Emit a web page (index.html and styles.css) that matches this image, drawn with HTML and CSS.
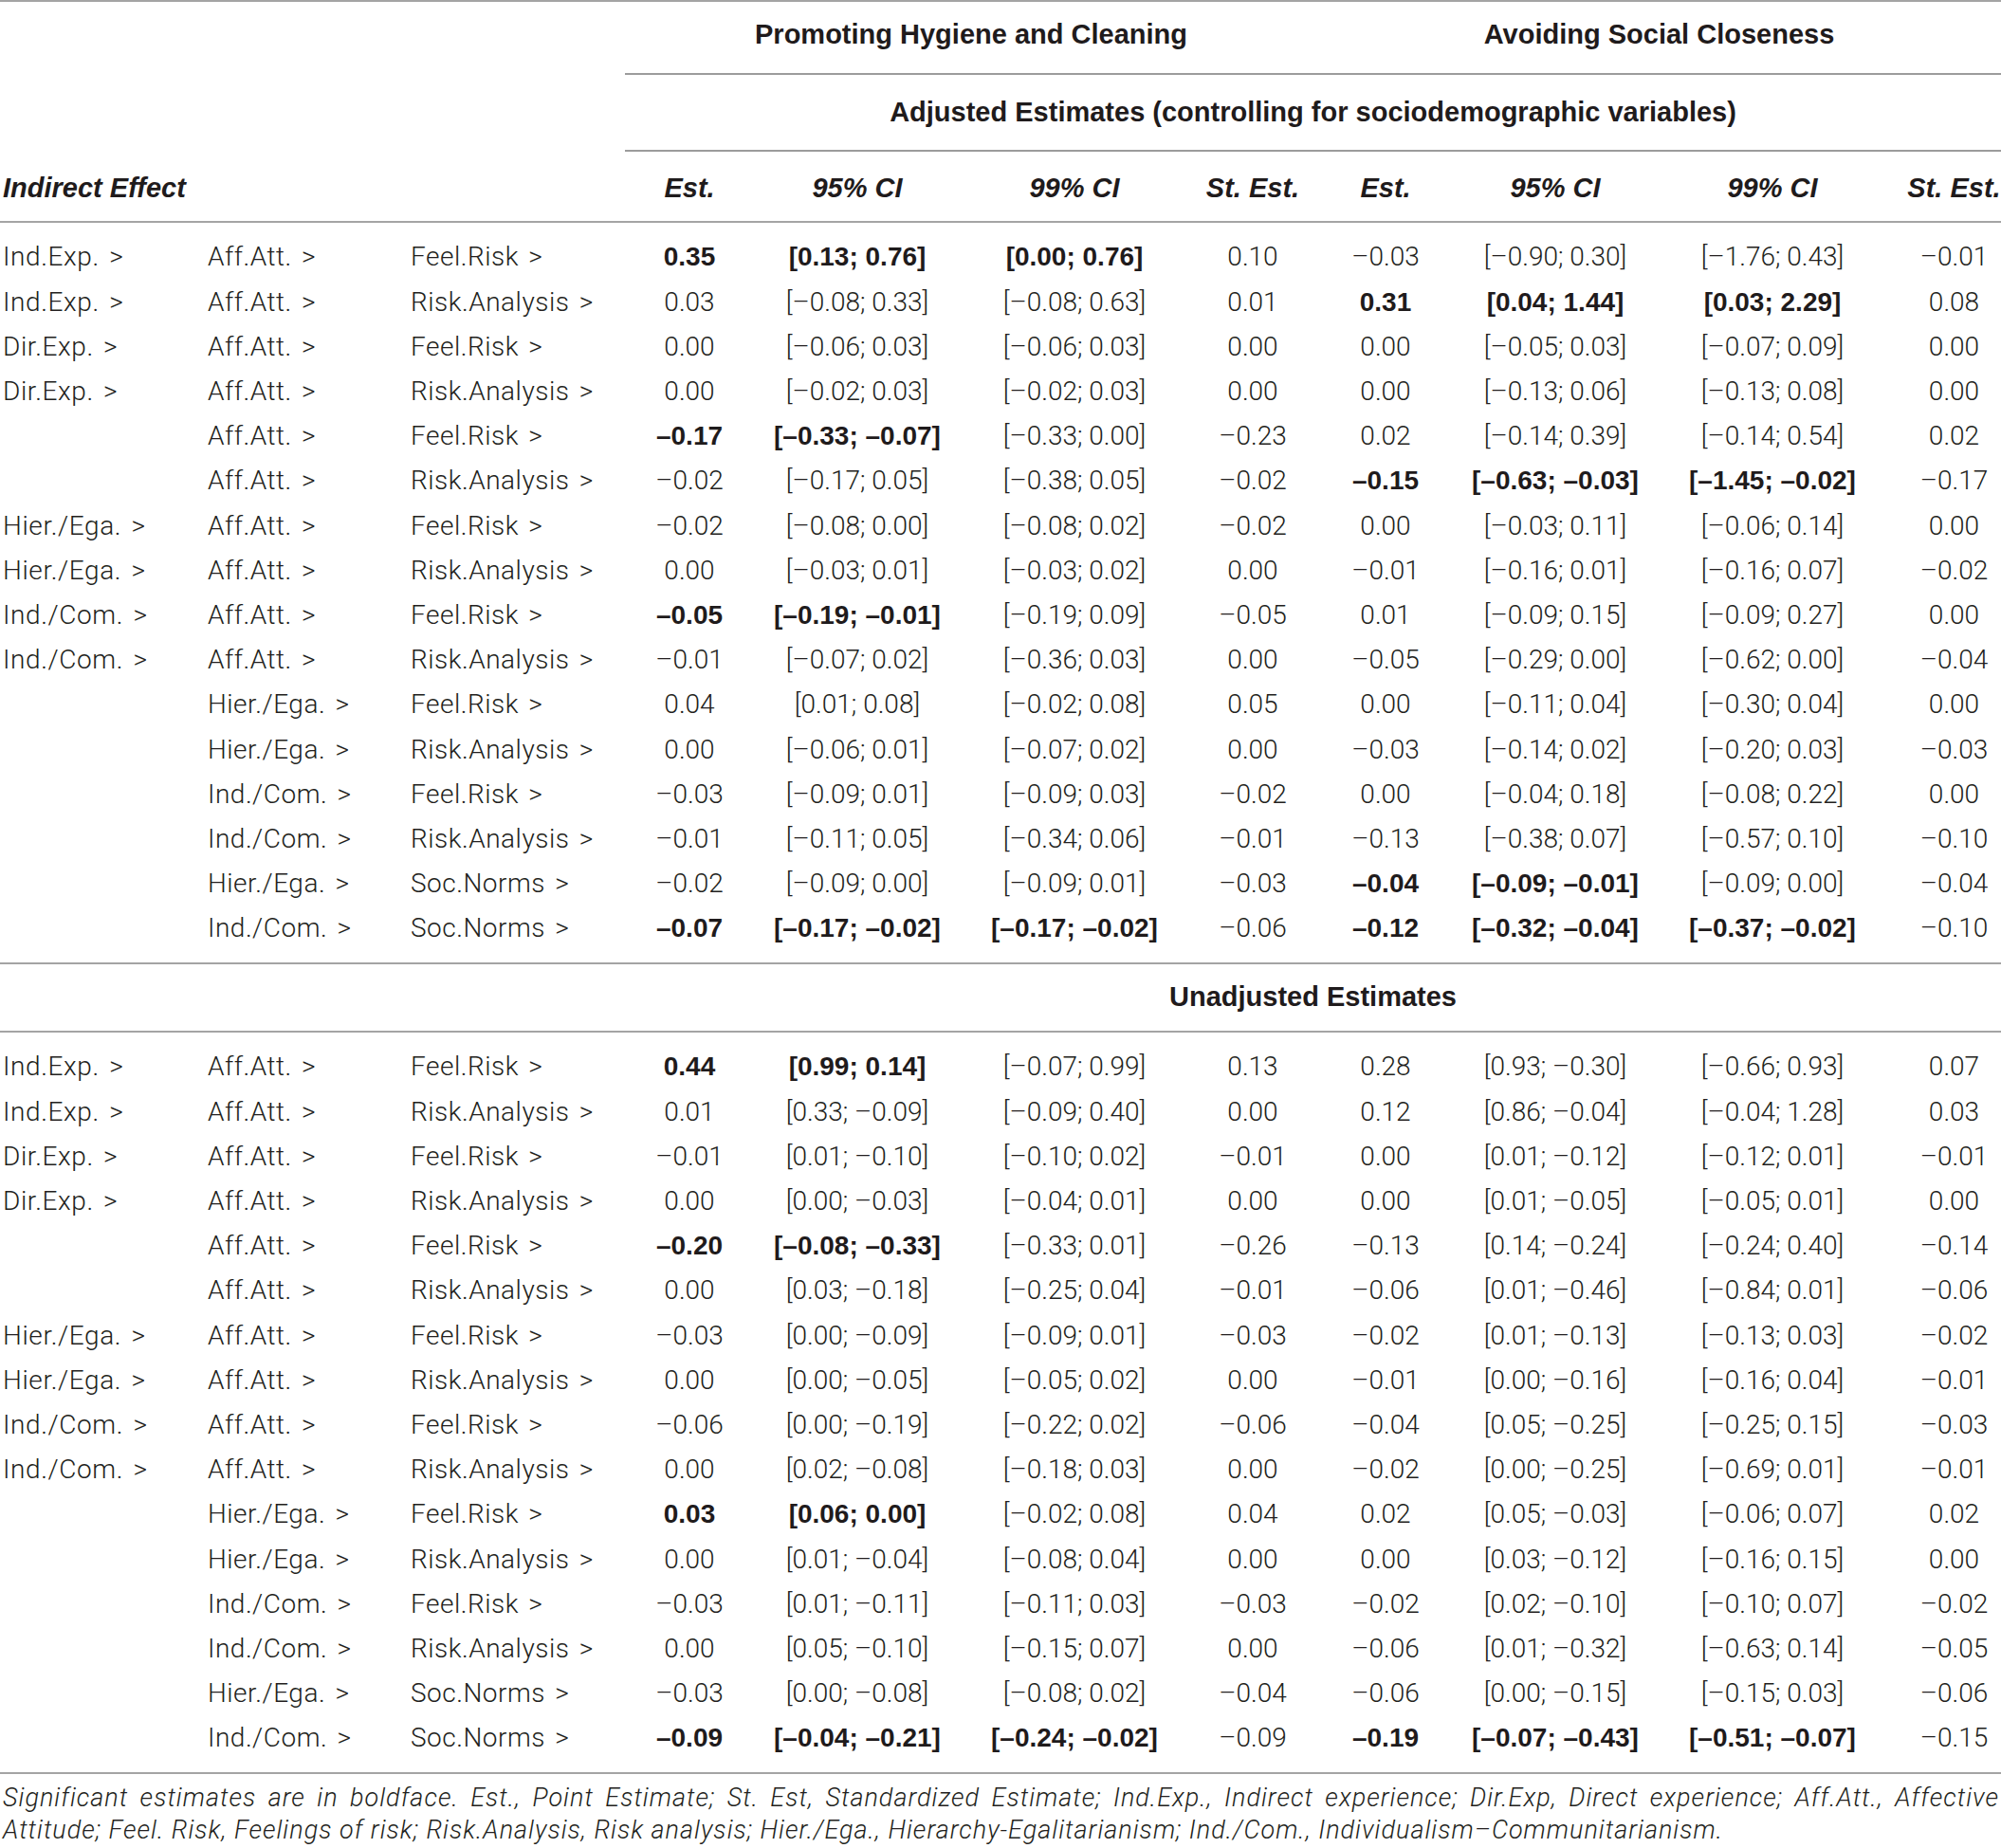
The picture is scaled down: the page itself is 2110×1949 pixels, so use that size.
FILE: index.html
```html
<!DOCTYPE html>
<html lang="en">
<head>
<meta charset="utf-8">
<title>Indirect effects table</title>
<link rel="stylesheet" href="styles.css">
</head>
<body>
<table class="tbl">
<colgroup>
<col class="w1"><col class="w2"><col class="w3"><col class="w4"><col class="w5"><col class="w6"><col class="w7"><col class="w8"><col class="w9"><col class="w10"><col class="w11">
</colgroup>
<thead>
<tr class="h1">
<td colspan="3"></td>
<th colspan="4" class="span">Promoting Hygiene and Cleaning</th>
<th colspan="4" class="span">Avoiding Social Closeness</th>
</tr>
<tr class="h2">
<td colspan="3"></td>
<th colspan="8" class="span">Adjusted Estimates (controlling for sociodemographic variables)</th>
</tr>
<tr class="h3">
<th colspan="3" class="ie">Indirect Effect</th>
<th>Est.</th><th>95% CI</th><th>99% CI</th><th>St. Est.</th>
<th>Est.</th><th>95% CI</th><th>99% CI</th><th class="last">St. Est.</th>
</tr>
</thead>
<tbody>
<tr class="first"><td class="a">Ind.Exp. &gt;</td><td class="b">Aff.Att. &gt;</td><td class="b">Feel.Risk &gt;</td><td class="s">0.35</td><td class="s">[0.13; 0.76]</td><td class="s">[0.00; 0.76]</td><td>0.10</td><td>–0.03</td><td>[–0.90; 0.30]</td><td>[–1.76; 0.43]</td><td class="last">–0.01</td></tr>
<tr><td class="a">Ind.Exp. &gt;</td><td class="b">Aff.Att. &gt;</td><td class="b">Risk.Analysis &gt;</td><td>0.03</td><td>[–0.08; 0.33]</td><td>[–0.08; 0.63]</td><td>0.01</td><td class="s">0.31</td><td class="s">[0.04; 1.44]</td><td class="s">[0.03; 2.29]</td><td class="last">0.08</td></tr>
<tr><td class="a">Dir.Exp. &gt;</td><td class="b">Aff.Att. &gt;</td><td class="b">Feel.Risk &gt;</td><td>0.00</td><td>[–0.06; 0.03]</td><td>[–0.06; 0.03]</td><td>0.00</td><td>0.00</td><td>[–0.05; 0.03]</td><td>[–0.07; 0.09]</td><td class="last">0.00</td></tr>
<tr><td class="a">Dir.Exp. &gt;</td><td class="b">Aff.Att. &gt;</td><td class="b">Risk.Analysis &gt;</td><td>0.00</td><td>[–0.02; 0.03]</td><td>[–0.02; 0.03]</td><td>0.00</td><td>0.00</td><td>[–0.13; 0.06]</td><td>[–0.13; 0.08]</td><td class="last">0.00</td></tr>
<tr><td class="a"></td><td class="b">Aff.Att. &gt;</td><td class="b">Feel.Risk &gt;</td><td class="s">–0.17</td><td class="s">[–0.33; –0.07]</td><td>[–0.33; 0.00]</td><td>–0.23</td><td>0.02</td><td>[–0.14; 0.39]</td><td>[–0.14; 0.54]</td><td class="last">0.02</td></tr>
<tr><td class="a"></td><td class="b">Aff.Att. &gt;</td><td class="b">Risk.Analysis &gt;</td><td>–0.02</td><td>[–0.17; 0.05]</td><td>[–0.38; 0.05]</td><td>–0.02</td><td class="s">–0.15</td><td class="s">[–0.63; –0.03]</td><td class="s">[–1.45; –0.02]</td><td class="last">–0.17</td></tr>
<tr><td class="a">Hier./Ega. &gt;</td><td class="b">Aff.Att. &gt;</td><td class="b">Feel.Risk &gt;</td><td>–0.02</td><td>[–0.08; 0.00]</td><td>[–0.08; 0.02]</td><td>–0.02</td><td>0.00</td><td>[–0.03; 0.11]</td><td>[–0.06; 0.14]</td><td class="last">0.00</td></tr>
<tr><td class="a">Hier./Ega. &gt;</td><td class="b">Aff.Att. &gt;</td><td class="b">Risk.Analysis &gt;</td><td>0.00</td><td>[–0.03; 0.01]</td><td>[–0.03; 0.02]</td><td>0.00</td><td>–0.01</td><td>[–0.16; 0.01]</td><td>[–0.16; 0.07]</td><td class="last">–0.02</td></tr>
<tr><td class="a">Ind./Com. &gt;</td><td class="b">Aff.Att. &gt;</td><td class="b">Feel.Risk &gt;</td><td class="s">–0.05</td><td class="s">[–0.19; –0.01]</td><td>[–0.19; 0.09]</td><td>–0.05</td><td>0.01</td><td>[–0.09; 0.15]</td><td>[–0.09; 0.27]</td><td class="last">0.00</td></tr>
<tr><td class="a">Ind./Com. &gt;</td><td class="b">Aff.Att. &gt;</td><td class="b">Risk.Analysis &gt;</td><td>–0.01</td><td>[–0.07; 0.02]</td><td>[–0.36; 0.03]</td><td>0.00</td><td>–0.05</td><td>[–0.29; 0.00]</td><td>[–0.62; 0.00]</td><td class="last">–0.04</td></tr>
<tr><td class="a"></td><td class="b">Hier./Ega. &gt;</td><td class="b">Feel.Risk &gt;</td><td>0.04</td><td>[0.01; 0.08]</td><td>[–0.02; 0.08]</td><td>0.05</td><td>0.00</td><td>[–0.11; 0.04]</td><td>[–0.30; 0.04]</td><td class="last">0.00</td></tr>
<tr><td class="a"></td><td class="b">Hier./Ega. &gt;</td><td class="b">Risk.Analysis &gt;</td><td>0.00</td><td>[–0.06; 0.01]</td><td>[–0.07; 0.02]</td><td>0.00</td><td>–0.03</td><td>[–0.14; 0.02]</td><td>[–0.20; 0.03]</td><td class="last">–0.03</td></tr>
<tr><td class="a"></td><td class="b">Ind./Com. &gt;</td><td class="b">Feel.Risk &gt;</td><td>–0.03</td><td>[–0.09; 0.01]</td><td>[–0.09; 0.03]</td><td>–0.02</td><td>0.00</td><td>[–0.04; 0.18]</td><td>[–0.08; 0.22]</td><td class="last">0.00</td></tr>
<tr><td class="a"></td><td class="b">Ind./Com. &gt;</td><td class="b">Risk.Analysis &gt;</td><td>–0.01</td><td>[–0.11; 0.05]</td><td>[–0.34; 0.06]</td><td>–0.01</td><td>–0.13</td><td>[–0.38; 0.07]</td><td>[–0.57; 0.10]</td><td class="last">–0.10</td></tr>
<tr><td class="a"></td><td class="b">Hier./Ega. &gt;</td><td class="b">Soc.Norms &gt;</td><td>–0.02</td><td>[–0.09; 0.00]</td><td>[–0.09; 0.01]</td><td>–0.03</td><td class="s">–0.04</td><td class="s">[–0.09; –0.01]</td><td>[–0.09; 0.00]</td><td class="last">–0.04</td></tr>
<tr class="lastrow"><td class="a"></td><td class="b">Ind./Com. &gt;</td><td class="b">Soc.Norms &gt;</td><td class="s">–0.07</td><td class="s">[–0.17; –0.02]</td><td class="s">[–0.17; –0.02]</td><td>–0.06</td><td class="s">–0.12</td><td class="s">[–0.32; –0.04]</td><td class="s">[–0.37; –0.02]</td><td class="last">–0.10</td></tr>
</tbody>
<tbody>
<tr class="h4">
<td colspan="3"></td>
<th colspan="8">Unadjusted Estimates</th>
</tr>
<tr class="first"><td class="a">Ind.Exp. &gt;</td><td class="b">Aff.Att. &gt;</td><td class="b">Feel.Risk &gt;</td><td class="s">0.44</td><td class="s">[0.99; 0.14]</td><td>[–0.07; 0.99]</td><td>0.13</td><td>0.28</td><td>[0.93; –0.30]</td><td>[–0.66; 0.93]</td><td class="last">0.07</td></tr>
<tr><td class="a">Ind.Exp. &gt;</td><td class="b">Aff.Att. &gt;</td><td class="b">Risk.Analysis &gt;</td><td>0.01</td><td>[0.33; –0.09]</td><td>[–0.09; 0.40]</td><td>0.00</td><td>0.12</td><td>[0.86; –0.04]</td><td>[–0.04; 1.28]</td><td class="last">0.03</td></tr>
<tr><td class="a">Dir.Exp. &gt;</td><td class="b">Aff.Att. &gt;</td><td class="b">Feel.Risk &gt;</td><td>–0.01</td><td>[0.01; –0.10]</td><td>[–0.10; 0.02]</td><td>–0.01</td><td>0.00</td><td>[0.01; –0.12]</td><td>[–0.12; 0.01]</td><td class="last">–0.01</td></tr>
<tr><td class="a">Dir.Exp. &gt;</td><td class="b">Aff.Att. &gt;</td><td class="b">Risk.Analysis &gt;</td><td>0.00</td><td>[0.00; –0.03]</td><td>[–0.04; 0.01]</td><td>0.00</td><td>0.00</td><td>[0.01; –0.05]</td><td>[–0.05; 0.01]</td><td class="last">0.00</td></tr>
<tr><td class="a"></td><td class="b">Aff.Att. &gt;</td><td class="b">Feel.Risk &gt;</td><td class="s">–0.20</td><td class="s">[–0.08; –0.33]</td><td>[–0.33; 0.01]</td><td>–0.26</td><td>–0.13</td><td>[0.14; –0.24]</td><td>[–0.24; 0.40]</td><td class="last">–0.14</td></tr>
<tr><td class="a"></td><td class="b">Aff.Att. &gt;</td><td class="b">Risk.Analysis &gt;</td><td>0.00</td><td>[0.03; –0.18]</td><td>[–0.25; 0.04]</td><td>–0.01</td><td>–0.06</td><td>[0.01; –0.46]</td><td>[–0.84; 0.01]</td><td class="last">–0.06</td></tr>
<tr><td class="a">Hier./Ega. &gt;</td><td class="b">Aff.Att. &gt;</td><td class="b">Feel.Risk &gt;</td><td>–0.03</td><td>[0.00; –0.09]</td><td>[–0.09; 0.01]</td><td>–0.03</td><td>–0.02</td><td>[0.01; –0.13]</td><td>[–0.13; 0.03]</td><td class="last">–0.02</td></tr>
<tr><td class="a">Hier./Ega. &gt;</td><td class="b">Aff.Att. &gt;</td><td class="b">Risk.Analysis &gt;</td><td>0.00</td><td>[0.00; –0.05]</td><td>[–0.05; 0.02]</td><td>0.00</td><td>–0.01</td><td>[0.00; –0.16]</td><td>[–0.16; 0.04]</td><td class="last">–0.01</td></tr>
<tr><td class="a">Ind./Com. &gt;</td><td class="b">Aff.Att. &gt;</td><td class="b">Feel.Risk &gt;</td><td>–0.06</td><td>[0.00; –0.19]</td><td>[–0.22; 0.02]</td><td>–0.06</td><td>–0.04</td><td>[0.05; –0.25]</td><td>[–0.25; 0.15]</td><td class="last">–0.03</td></tr>
<tr><td class="a">Ind./Com. &gt;</td><td class="b">Aff.Att. &gt;</td><td class="b">Risk.Analysis &gt;</td><td>0.00</td><td>[0.02; –0.08]</td><td>[–0.18; 0.03]</td><td>0.00</td><td>–0.02</td><td>[0.00; –0.25]</td><td>[–0.69; 0.01]</td><td class="last">–0.01</td></tr>
<tr><td class="a"></td><td class="b">Hier./Ega. &gt;</td><td class="b">Feel.Risk &gt;</td><td class="s">0.03</td><td class="s">[0.06; 0.00]</td><td>[–0.02; 0.08]</td><td>0.04</td><td>0.02</td><td>[0.05; –0.03]</td><td>[–0.06; 0.07]</td><td class="last">0.02</td></tr>
<tr><td class="a"></td><td class="b">Hier./Ega. &gt;</td><td class="b">Risk.Analysis &gt;</td><td>0.00</td><td>[0.01; –0.04]</td><td>[–0.08; 0.04]</td><td>0.00</td><td>0.00</td><td>[0.03; –0.12]</td><td>[–0.16; 0.15]</td><td class="last">0.00</td></tr>
<tr><td class="a"></td><td class="b">Ind./Com. &gt;</td><td class="b">Feel.Risk &gt;</td><td>–0.03</td><td>[0.01; –0.11]</td><td>[–0.11; 0.03]</td><td>–0.03</td><td>–0.02</td><td>[0.02; –0.10]</td><td>[–0.10; 0.07]</td><td class="last">–0.02</td></tr>
<tr><td class="a"></td><td class="b">Ind./Com. &gt;</td><td class="b">Risk.Analysis &gt;</td><td>0.00</td><td>[0.05; –0.10]</td><td>[–0.15; 0.07]</td><td>0.00</td><td>–0.06</td><td>[0.01; –0.32]</td><td>[–0.63; 0.14]</td><td class="last">–0.05</td></tr>
<tr><td class="a"></td><td class="b">Hier./Ega. &gt;</td><td class="b">Soc.Norms &gt;</td><td>–0.03</td><td>[0.00; –0.08]</td><td>[–0.08; 0.02]</td><td>–0.04</td><td>–0.06</td><td>[0.00; –0.15]</td><td>[–0.15; 0.03]</td><td class="last">–0.06</td></tr>
<tr class="lastrow"><td class="a"></td><td class="b">Ind./Com. &gt;</td><td class="b">Soc.Norms &gt;</td><td class="s">–0.09</td><td class="s">[–0.04; –0.21]</td><td class="s">[–0.24; –0.02]</td><td>–0.09</td><td class="s">–0.19</td><td class="s">[–0.07; –0.43]</td><td class="s">[–0.51; –0.07]</td><td class="last">–0.15</td></tr>
</tbody>
</table>
<p class="note"><span class="l1">Significant estimates are in boldface. Est., Point Estimate; St. Est, Standardized Estimate; Ind.Exp., Indirect experience; Dir.Exp, Direct experience; Aff.Att., Affective</span> Attitude; Feel. Risk, Feelings of risk; Risk.Analysis, Risk analysis; Hier./Ega., Hierarchy-Egalitarianism; Ind./Com., Individualism–Communitarianism.</p>
</body>
</html>
```

FILE: styles.css
```css
html, body {
  margin: 0;
  padding: 0;
  background: #ffffff;
}
body {
  width: 2110px;
  color: #231f20;
  font-family: Roboto, "Liberation Sans", Arial, sans-serif;
  font-weight: 300;
}
.tbl {
  width: 2110px;
  table-layout: fixed;
  border-collapse: separate;
  border-spacing: 0;
  border-top: 2px solid #a4a4a4;
}
.w1 { width: 219px; }
.w2 { width: 214px; }
.w3 { width: 226px; }
.w4 { width: 136px; }
.w5 { width: 218px; }
.w6 { width: 240px; }
.w7 { width: 136px; }
.w8 { width: 144px; }
.w9 { width: 214px; }
.w10 { width: 244px; }
.w11 { width: 119px; }

.tbl td, .tbl th {
  padding: 0;
  white-space: nowrap;
  text-align: center;
  vertical-align: top;
}
.tbl td {
  font-size: 28px;
  line-height: 47.2px;
}
.tbl th {
  font-family: "Liberation Sans", Arial, sans-serif;
  font-weight: 700;
  font-size: 29px;
  color: #1f1b1c;
}
.h1 th {
  line-height: 69px;
  padding-bottom: 6px;
  border-bottom: 2px solid #9c9c9c;
}
.h2 th {
  line-height: 79px;
  border-bottom: 2px solid #9c9c9c;
}
.h3 th {
  font-style: italic;
  line-height: 69px;
  padding-top: 4px;
  border-bottom: 2px solid #a4a4a4;
}
.h3 .ie {
  text-align: left;
  padding-left: 3px;
}
.h4 th {
  line-height: 68px;
  padding-bottom: 2px;
  border-bottom: 2px solid #a4a4a4;
}
.h4 td {
  border-bottom: 2px solid #a4a4a4;
}
.tbl td.a {
  text-align: left;
  padding-left: 3px;
  letter-spacing: 0.6px;
  word-spacing: 3px;
}
.tbl td.b {
  text-align: left;
  padding-left: 0;
  letter-spacing: 0.5px;
  word-spacing: 3px;
}
.tbl .last {
  padding-left: 20px;
}
.tbl td.s {
  font-family: "Liberation Sans", Arial, sans-serif;
  font-weight: 700;
  color: #1f1b1c;
}
.first td {
  padding-top: 12.4px;
}
.lastrow td {
  padding-bottom: 12.4px;
  border-bottom: 2px solid #a4a4a4;
}
.note {
  margin: 8px 0 0 0;
  padding: 0 2px 0 3px;
  font-style: italic;
  font-weight: 300;
  font-size: 27px;
  letter-spacing: 1px;
  line-height: 34px;
  text-align: left;
}
.note .l1 {
  display: block;
  text-align: justify;
  text-align-last: justify;
}
```
